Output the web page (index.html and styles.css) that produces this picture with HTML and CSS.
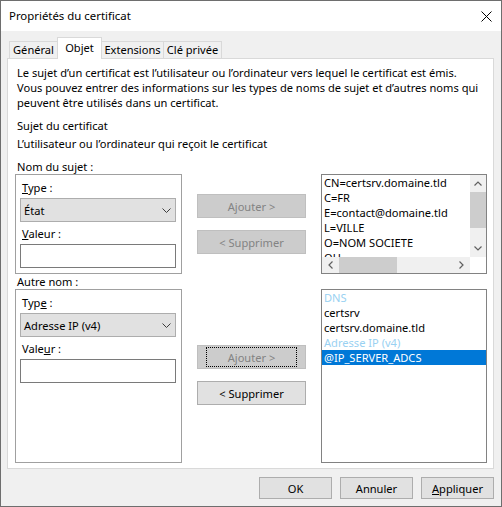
FILE: index.html
```html
<!DOCTYPE html>
<html lang="fr">
<head>
<meta charset="utf-8">
<title>Propriétés du certificat</title>
<link rel="stylesheet" href="styles.css">
</head>
<body>
<div class="window">
  <div class="titlebar">
    <span class="title">Propriétés du certificat</span>
    <svg class="close" width="11" height="11" viewBox="0 0 11 11"><path d="M0.5 0.5L10.5 10.5M10.5 0.5L0.5 10.5" stroke="#000" stroke-width="1" fill="none"/></svg>
  </div>
  <div class="body">
    <div class="tabs">
      <div class="tab t-general">Général</div>
      <div class="tab active t-objet">Objet</div>
      <div class="tab t-ext">Extensions</div>
      <div class="tab t-cle">Clé privée</div>
    </div>
    <div class="panel">
      <p class="text intro">Le sujet d’un certificat est l’utilisateur ou l’ordinateur vers lequel le certificat est émis.<br>Vous pouvez entrer des informations sur les types de noms de sujet et d’autres noms qui<br>peuvent être utilisés dans un certificat.</p>
      <p class="text l-sujet">Sujet du certificat</p>
      <p class="text l-user">L’utilisateur ou l’ordinateur qui reçoit le certificat</p>

      <p class="text l-section">Nom du sujet :</p>
      <div class="row">
        <div class="group g1">
          <p class="glabel"><u>T</u>ype :</p>
          <div class="select"><span>État</span><svg width="9" height="5" viewBox="0 0 9 5"><path d="M0.5 0.5L4.5 4.5L8.5 0.5" stroke="#3c3c3c" fill="none"/></svg></div>
          <p class="glabel vlabel"><u>V</u>aleur :</p>
          <div class="input"></div>
        </div>
        <div class="actions a1">
          <div class="btn disabled">Ajouter &gt;</div>
          <div class="btn disabled second">&lt; Supprimer</div>
        </div>
        <div class="list list1">
          <div class="items">
            <div class="item">CN=certsrv.domaine.tld</div>
            <div class="item">C=FR</div>
            <div class="item">E=contact@domaine.tld</div>
            <div class="item">L=VILLE</div>
            <div class="item">O=NOM SOCIETE</div>
            <div class="item">OU</div>
          </div>
          <div class="vscroll">
            <div class="arrow"><svg width="8" height="5" viewBox="0 0 8 5"><path d="M0.5 4.5L4 1L7.5 4.5" stroke="#606060" stroke-width="1.2" fill="none"/></svg></div>
            <div class="vtrack"><div class="vthumb"></div></div>
            <div class="arrow"><svg width="8" height="5" viewBox="0 0 8 5"><path d="M0.5 0.5L4 4L7.5 0.5" stroke="#606060" stroke-width="1.2" fill="none"/></svg></div>
          </div>
          <div class="hscroll">
            <div class="harrow"><svg width="5" height="8" viewBox="0 0 5 8"><path d="M4.5 0.5L1 4L4.5 7.5" stroke="#606060" stroke-width="1.2" fill="none"/></svg></div>
            <div class="htrack"><div class="hthumb"></div></div>
            <div class="harrow"><svg width="5" height="8" viewBox="0 0 5 8"><path d="M0.5 0.5L4 4L0.5 7.5" stroke="#606060" stroke-width="1.2" fill="none"/></svg></div>
          </div>
          <div class="corner"></div>
        </div>
      </div>

      <p class="text l-section">Autre nom :</p>
      <div class="row">
        <div class="group g2">
          <p class="glabel">Typ<u>e</u> :</p>
          <div class="select"><span>Adresse IP (v4)</span><svg width="9" height="5" viewBox="0 0 9 5"><path d="M0.5 0.5L4.5 4.5L8.5 0.5" stroke="#3c3c3c" fill="none"/></svg></div>
          <p class="glabel vlabel">Vale<u>u</u>r :</p>
          <div class="input"></div>
        </div>
        <div class="actions a2">
          <div class="btn disabled focus"><span class="focusring">Ajouter &gt;</span></div>
          <div class="btn second">&lt; Supprimer</div>
        </div>
        <div class="list list2">
          <div class="item header">DNS</div>
          <div class="item">certsrv</div>
          <div class="item">certsrv.domaine.tld</div>
          <div class="item header">Adresse IP (v4)</div>
          <div class="item selected">@IP_SERVER_ADCS</div>
        </div>
      </div>
    </div>
    <div class="footer">
      <div class="btn fbtn">OK</div>
      <div class="btn fbtn">Annuler</div>
      <div class="btn fbtn"><span><u>A</u>ppliquer</span></div>
    </div>
  </div>
</div>
</body>
</html>
```

FILE: styles.css
```css
* { box-sizing: border-box; }
html, body { margin: 0; padding: 0; background: #ffffff; }
body { font-family: "Noto Sans", "Open Sans", sans-serif; font-size: 11.1px; color: #000; }
p { margin: 0; }

.window {
  width: 502px;
  height: 507px;
  border: 1px solid #6e6e6e;
  background: #f0f0f0;
  display: flex;
  flex-direction: column;
}

.titlebar {
  height: 30px;
  background: #ffffff;
  display: flex;
  align-items: center;
  justify-content: space-between;
  padding: 0 9px 0 8px;
  flex: none;
}
.title { font-size: 11.4px; line-height: 16px; }
.close { display: block; }

.body {
  flex: 1;
  display: flex;
  flex-direction: column;
  padding: 0 7px 0 6px;
}

.tabs {
  height: 27px;
  display: flex;
  align-items: flex-end;
  padding-left: 2px;
  flex: none;
}
.tab {
  height: 17px;
  border: 1px solid #d9d9d9;
  border-bottom: none;
  margin-right: -1px;
  background: #f0f0f0;
  text-align: center;
  line-height: 16px;
  white-space: nowrap;
}
.t-general { width: 49px; }
.t-objet { width: 45px; }
.t-ext { width: 63px; }
.t-cle { width: 59px; }
.tab.active {
  height: 22px;
  margin-bottom: -1px;
  background: #ffffff;
  line-height: 19px;
  position: relative;
  z-index: 1;
}

.panel {
  height: 411px;
  flex: none;
  background: #ffffff;
  border: 1px solid #d9d9d9;
  padding: 0 7px;
}

.text { padding-left: 2px; line-height: 15px; white-space: nowrap; }
.intro { margin-top: 6px; }
.l-sujet { margin-top: 8px; }
.l-user { margin-top: 3px; }
.l-section { margin-top: 8px; }
.row + .l-section { margin-top: 0; }

.row { display: flex; align-items: flex-start; }

.group {
  width: 167px;
  border: 1px solid #a0a0a0;
  padding: 5px 5px 0 4px;
  flex: none;
}
.g1 { height: 100px; }
.g2 { height: 174px; }
.glabel { line-height: 15px; padding-left: 2px; }
.vlabel { margin-top: 4px; }

.select {
  margin-top: 3px;
  height: 24px;
  border: 1px solid #adadad;
  background: #e1e1e1;
  display: flex;
  align-items: center;
  justify-content: space-between;
  padding: 0 4px 0 3px;
}
.select svg { display: block; }
.input {
  margin-top: 3px;
  height: 24px;
  border: 1px solid #7a7a7a;
  background: #ffffff;
}

.actions {
  width: 109px;
  margin-left: 15px;
  display: flex;
  flex-direction: column;
  flex: none;
}
.a1 { padding-top: 20px; }
.a2 { padding-top: 56px; }

.btn {
  height: 24px;
  border: 1px solid #adadad;
  background: #e1e1e1;
  display: flex;
  align-items: center;
  justify-content: center;
  white-space: nowrap;
}
.btn.second { margin-top: 12px; }
.btn.disabled {
  background: #cccccc;
  border-color: #bfbfbf;
  color: #838383;
}
.btn.focus { padding: 1px 8px; align-items: stretch; }
.focusring {
  flex: 1;
  border: 1px dotted #000000;
  display: flex;
  align-items: center;
  justify-content: center;
}

.list {
  width: 166px;
  margin-left: 15px;
  border: 1px solid #828282;
  background: #ffffff;
  flex: none;
}
.list1 {
  height: 100px;
  display: grid;
  grid-template-columns: 1fr 16px;
  grid-template-rows: 1fr 16px;
  overflow: hidden;
}
.items { overflow: hidden; min-height: 0; }
.item {
  height: 15px;
  line-height: 15px;
  padding-left: 2px;
  white-space: nowrap;
}
.list2 { height: 174px; }
.item.header { color: #99d1f2; }
.item.selected { background: #0078d7; color: #ffffff; }

.vscroll {
  background: #f0f0f0;
  display: flex;
  flex-direction: column;
}
.arrow {
  height: 17px;
  display: flex;
  align-items: center;
  justify-content: center;
  flex: none;
}
.vtrack { flex: 1; }
.vthumb { height: 36px; background: #cdcdcd; }

.hscroll {
  background: #f0f0f0;
  display: flex;
}
.harrow {
  width: 17px;
  display: flex;
  align-items: center;
  justify-content: center;
  flex: none;
}
.htrack { flex: 1; }
.hthumb { width: 58px; height: 100%; background: #cdcdcd; }
.corner { background: #ffffff; }

.footer {
  display: flex;
  justify-content: flex-end;
  gap: 8px;
  padding-top: 8px;
}
.fbtn { width: 73px; height: 22px; }
```
